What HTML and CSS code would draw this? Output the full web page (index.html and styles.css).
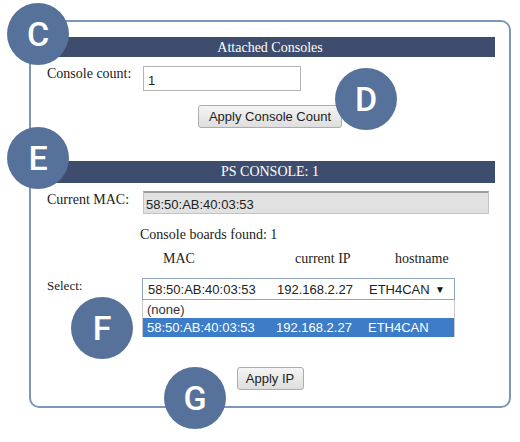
FILE: index.html
```html
<!DOCTYPE html>
<html>
<head>
<meta charset="utf-8">
<link rel="stylesheet" href="styles.css">
</head>
<body>
<div class="page">
  <div class="panel">
    <div class="bar bar-first">Attached Consoles</div>
    <div class="row row-count">
      <span class="label">Console count:</span>
      <div class="input count-input">1</div>
    </div>
    <div class="btn-row btn-row-count">
      <button class="btn btn-count">Apply Console Count</button>
    </div>

    <div class="bar bar-second">PS CONSOLE: 1</div>
    <div class="row row-mac">
      <span class="label">Current MAC:</span>
      <div class="input mac-input">58:50:AB:40:03:53</div>
    </div>
    <div class="found">Console boards found: 1</div>
    <div class="cols">
      <span class="col col-mac">MAC</span>
      <span class="col col-ip">current IP</span>
      <span class="col col-host">hostname</span>
    </div>
    <div class="row row-select">
      <span class="label label-small">Select:</span>
      <div class="select-wrap">
        <div class="select">
          <span class="opt-mac">58:50:AB:40:03:53</span>
          <span class="opt-ip">192.168.2.27</span>
          <span class="opt-host">ETH4CAN</span>
          <span class="arrow">&#9660;</span>
        </div>
        <div class="list">
          <div class="opt">(none)</div>
          <div class="opt opt-selected">
            <span class="opt-mac">58:50:AB:40:03:53</span>
            <span class="opt-ip">192.168.2.27</span>
            <span class="opt-host">ETH4CAN</span>
          </div>
        </div>
      </div>
    </div>
    <div class="btn-row btn-row-ip">
      <button class="btn btn-ip">Apply IP</button>
    </div>
  </div>

  <div class="badge badge-c">C</div>
  <div class="badge badge-d">D</div>
  <div class="badge badge-e">E</div>
  <div class="badge badge-f">F</div>
  <div class="badge badge-g">G</div>
</div>
</body>
</html>
```

FILE: styles.css
```css
html, body {
  margin: 0;
  padding: 0;
  background: #ffffff;
}

.page {
  position: relative;
  width: 520px;
  height: 442px;
  overflow: hidden;
  padding-top: 20px;
  box-sizing: border-box;
  font-family: "Liberation Serif", "Times New Roman", serif;
  color: #222222;
}

.panel {
  margin-left: 29px;
  width: 482px;
  height: 388px;
  box-sizing: border-box;
  border: 2px solid #7d97bb;
  border-radius: 10px;
  display: flex;
  flex-direction: column;
}

.bar {
  margin: 0 14px;
  background: #3e4d6d;
  color: #ffffff;
  text-align: center;
  font-size: 14px;
}

.bar-first {
  margin-top: 15px;
  height: 20px;
  line-height: 21px;
}

.bar-second {
  margin-top: 33px;
  height: 22px;
  line-height: 22px;
}

.row {
  display: flex;
  align-items: flex-start;
  padding-left: 16px;
}

.label {
  font-size: 14px;
  line-height: 16px;
}

.label-small {
  font-size: 13px;
}

.row-count {
  margin-top: 9px;
}

.row-count .label {
  width: 96px;
  margin-top: 0;
}

.input {
  box-sizing: border-box;
  font-family: "Liberation Sans", Arial, sans-serif;
  font-size: 13px;
  color: #222222;
}

.count-input {
  width: 158px;
  height: 25px;
  border: 1px solid #b4b4b4;
  padding: 6px 0 0 4px;
  background: #ffffff;
}

.btn-row {
  display: flex;
  justify-content: center;
}

.btn-row-count {
  margin-top: 14px;
}

.btn {
  box-sizing: border-box;
  height: 23px;
  padding: 0;
  font-family: "Liberation Sans", Arial, sans-serif;
  font-size: 13px;
  color: #222222;
  background: linear-gradient(#f4f4f4, #dedede);
  border: 1px solid #acacac;
  border-radius: 3px;
}

.btn-count {
  width: 144px;
}

.btn-row-ip {
  margin-top: 30px;
}

.btn-ip {
  width: 67px;
}

.row-mac {
  margin-top: 8px;
}

.row-mac .label {
  width: 96px;
  margin-top: 1px;
}

.mac-input {
  width: 346px;
  height: 23px;
  background: #e1e1e1;
  border: 1px solid #c4c4c4;
  border-top: 2px solid #9d9d9d;
  padding: 4px 0 0 2px;
}

.found {
  margin-top: 13px;
  padding-left: 109px;
  font-size: 14px;
  line-height: 16px;
}

.cols {
  display: flex;
  margin-top: 8px;
  padding-left: 132px;
  font-size: 14px;
  line-height: 16px;
}

.col-mac {
  width: 132px;
}

.col-ip {
  width: 100px;
}

.row-select {
  margin-top: 11px;
}

.row-select .label {
  width: 95px;
  margin-top: 0;
}

.select-wrap {
  width: 313px;
  font-family: "Liberation Sans", Arial, sans-serif;
  font-size: 13px;
}

.select {
  position: relative;
  display: flex;
  align-items: center;
  box-sizing: border-box;
  height: 22px;
  border: 1px solid #8fa6c3;
  padding-left: 5px;
  color: #222222;
  background: #ffffff;
}

.opt-mac {
  width: 129px;
}

.opt-ip {
  width: 92px;
}

.arrow {
  margin-left: auto;
  margin-right: 9px;
  font-size: 10px;
  color: #111111;
}

.list {
  border-left: 1px solid #c8c8c8;
  border-right: 1px solid #c8c8c8;
}

.opt {
  display: flex;
  align-items: center;
  height: 18px;
  padding-left: 4px;
  color: #333333;
}

.opt-selected {
  height: 19px;
  background: #3d7cc7;
  color: #ffffff;
}

.badge {
  position: absolute;
  width: 62px;
  height: 62px;
  border-radius: 50%;
  background: #57729a;
  color: #ffffff;
  font-family: Roboto, "Open Sans", sans-serif;
  font-weight: 500;
  font-size: 34px;
  line-height: 62px;
  text-align: center;
}

.badge-c { left: 7px; top: 3px; }
.badge-d { left: 335px; top: 68px; }
.badge-e { left: 7px; top: 127px; }
.badge-f { left: 71px; top: 297px; }
.badge-g { left: 164px; top: 367px; }
```
